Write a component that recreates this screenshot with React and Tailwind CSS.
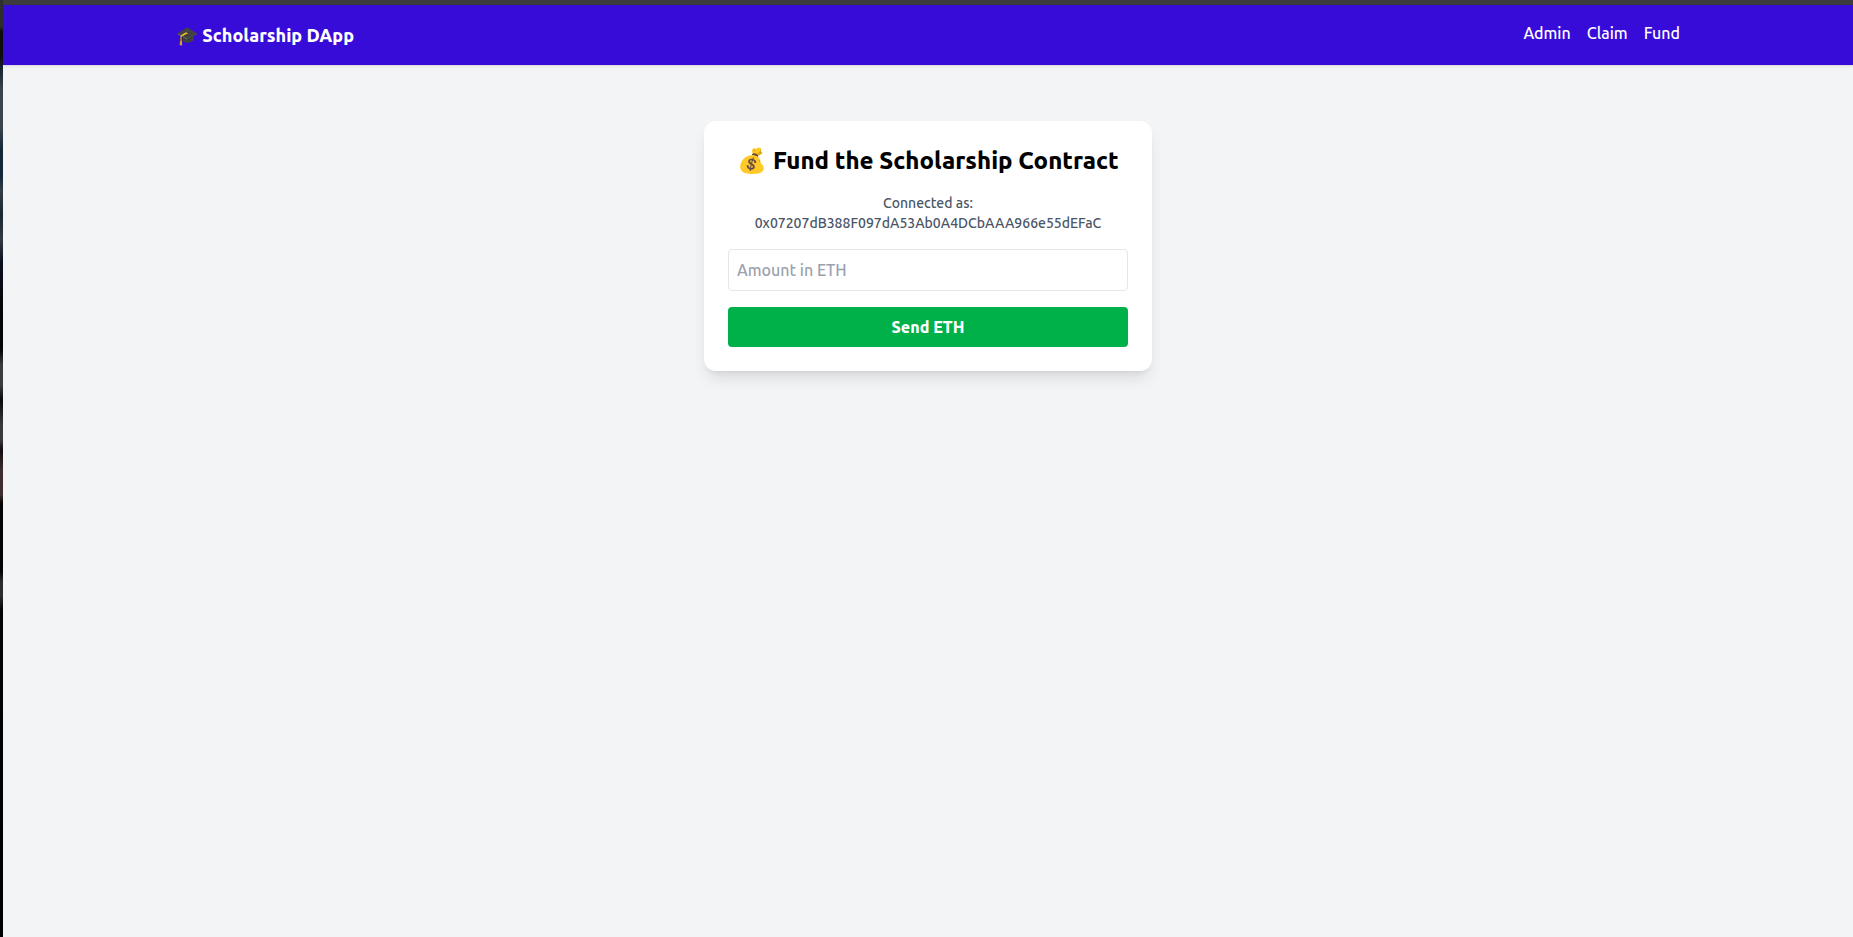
const links = ["Admin", "Claim", "Fund"];

function WindowEdge() {
  return (
    <div className="w-[3px] shrink-0 bg-[linear-gradient(to_bottom,#2e2e2e_0px,#2e2e2e_27px,#101010_31px,#101010_58px,#16222e_66px,#3a444c_90px,#3a444c_128px,#12283a_150px,#12283a_176px,#333d44_190px,#1a2832_215px,#333a42_240px,#0b1020_262px,#050505_310px,#050505_350px,#3c3c3c_365px,#3c3c3c_385px,#0c0a0a_400px,#3a3a3a_425px,#3a3a3a_440px,#120c0e_450px,#3e2e30_470px,#3e2e30_495px,#050404_503px,#050404_572px,#2c2c2c_582px,#2c2c2c_596px,#040404_610px,#000000_100%)]" />
  );
}

function Navbar() {
  return (
    <header className="bg-[#370cd9] p-4 text-white shadow-sm">
      <nav className="container mx-auto flex justify-between px-4">
        <h1 className="text-lg font-extrabold">🎓 Scholarship DApp</h1>
        <div className="space-x-4">
          {links.map((label) => (
            <a key={label} href={`#${label.toLowerCase()}`}>
              {label}
            </a>
          ))}
        </div>
      </nav>
    </header>
  );
}

function FundCard() {
  return (
    <section className="mx-auto mt-10 max-w-md rounded-xl bg-white p-6 shadow-lg">
      <h2 className="mb-4 text-center text-2xl font-extrabold text-black">
        💰 Fund the Scholarship Contract
      </h2>
      <p className="mb-4 text-center text-sm text-gray-600">
        Connected as: 0x07207dB388F097dA53Ab0A4DCbAAA966e55dEFaC
      </p>
      <input
        type="text"
        aria-label="Amount in ETH"
        placeholder="Amount in ETH"
        className="mb-4 block w-full rounded-sm border border-gray-200 p-2 placeholder:text-gray-400"
      />
      <button
        type="button"
        className="block w-full rounded-sm bg-[#00b048] px-4 py-2 font-extrabold text-white"
      >
        Send ETH
      </button>
    </section>
  );
}

export default function App() {
  return (
    <div className="flex min-h-screen bg-gray-100 font-['Ubuntu','Noto_Sans',sans-serif] [font-weight:460]">
      <WindowEdge />
      <div className="min-w-0 flex-1">
        <div className="h-[5px] bg-[#3c3c3c]" />
        <Navbar />
        <main className="p-4">
          <FundCard />
        </main>
      </div>
    </div>
  );
}
